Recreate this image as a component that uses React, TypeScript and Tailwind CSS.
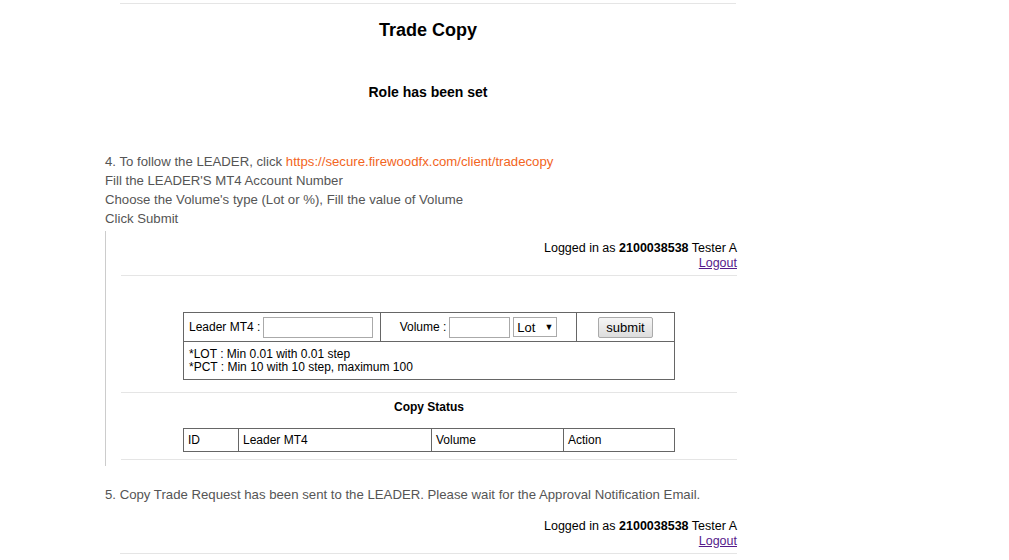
import React from 'react';

function LoggedIn() {
  return (
    <div className="text-right text-[12.5px] leading-[15px] text-black pt-[10px] pb-[4px]">
      <div>
        Logged in as <b>2100038538</b> Tester A
      </div>
      <a href="#" className="underline text-[#551a8b]">Logout</a>
    </div>
  );
}

export default function App() {
  return (
    <div className="w-[1009px] h-[560px] overflow-hidden bg-white font-['Liberation_Sans',Arial,sans-serif]">
      <div className="ml-[120px] w-[616px] pt-[3px]">
        <hr className="border-t border-[#e5e5e5]" />
        <h1 className="text-center text-[18px] font-bold text-black mt-[15px] leading-[22px]">Trade Copy</h1>
        <h3 className="text-center text-[14px] font-bold text-black mt-[43px] leading-[17px]">Role has been set</h3>
      </div>

      <div className="ml-[105px] w-[632px] mt-[51px] text-[13.2px] leading-[19px] text-[#555]">
        <div>
          4. To follow the LEADER, click{' '}
          <a href="#" className="text-[#f26522]">https://secure.firewoodfx.com/client/tradecopy</a>
        </div>
        <div>Fill the LEADER'S MT4 Account Number</div>
        <div>Choose the Volume's type (Lot or %), Fill the value of Volume</div>
        <div>Click Submit</div>

        <div className="border-l border-[#ccc] pl-[15px] mt-[3px] pb-[6px]">
          <LoggedIn />
          <hr className="border-t border-[#e5e5e5]" />
          <div className="pt-[36px] pb-[12px] flex justify-center">
            <table className="w-[492px] border border-[#333] text-[12px] text-black border-collapse">
              <tbody>
                <tr className="h-[29px]">
                  <td className="border border-[#666] px-[5px] w-[197px]">
                    <div className="flex items-center gap-[3px]">
                      Leader MT4 :
                      <input className="w-[110px] h-[21px] border border-[#aaa]" />
                    </div>
                  </td>
                  <td className="border border-[#666] w-[196px]">
                    <div className="flex items-center justify-center gap-[3px]">
                      Volume :
                      <input className="w-[61px] h-[21px] border border-[#aaa]" />
                      <span className="w-[44px] h-[20px] border border-[#aaa] flex items-center justify-between px-[3px] text-[13px]">
                        Lot <span className="text-[9px]">▼</span>
                      </span>
                    </div>
                  </td>
                  <td className="border border-[#666]">
                    <div className="flex justify-center">
                      <button className="w-[55px] h-[21px] border border-[#aaa] rounded-[2px] bg-gradient-to-b from-[#f6f6f6] to-[#dddddd] text-[13px] leading-none">
                        submit
                      </button>
                    </div>
                  </td>
                </tr>
                <tr className="h-[38px]">
                  <td colSpan={3} className="border border-[#666] px-[5px] leading-[13px]">
                    <div>*LOT : Min 0.01 with 0.01 step</div>
                    <div>*PCT : Min 10 with 10 step, maximum 100</div>
                  </td>
                </tr>
              </tbody>
            </table>
          </div>
          <hr className="border-t border-[#e5e5e5]" />
          <div className="text-center font-bold text-black text-[12px] leading-[15px] mt-[7px]">Copy Status</div>
          <div className="flex justify-center mt-[13px] mb-[7px]">
            <table className="w-[492px] border border-[#333] text-[12px] text-black border-collapse">
              <tbody>
                <tr className="h-[23px]">
                  <td className="border border-[#666] px-[4px] w-[55px]">ID</td>
                  <td className="border border-[#666] px-[4px] w-[193px]">Leader MT4</td>
                  <td className="border border-[#666] px-[4px] w-[132px]">Volume</td>
                  <td className="border border-[#666] px-[4px]">Action</td>
                </tr>
              </tbody>
            </table>
          </div>
          <hr className="border-t border-[#e5e5e5]" />
        </div>

        <div className="mt-[19px]">
          5. Copy Trade Request has been sent to the LEADER. Please wait for the Approval Notification Email.
        </div>
        <div className="pl-[15px] mt-[5px]">
          <LoggedIn />
          <hr className="border-t border-[#e5e5e5]" />
        </div>
      </div>
    </div>
  );
}
